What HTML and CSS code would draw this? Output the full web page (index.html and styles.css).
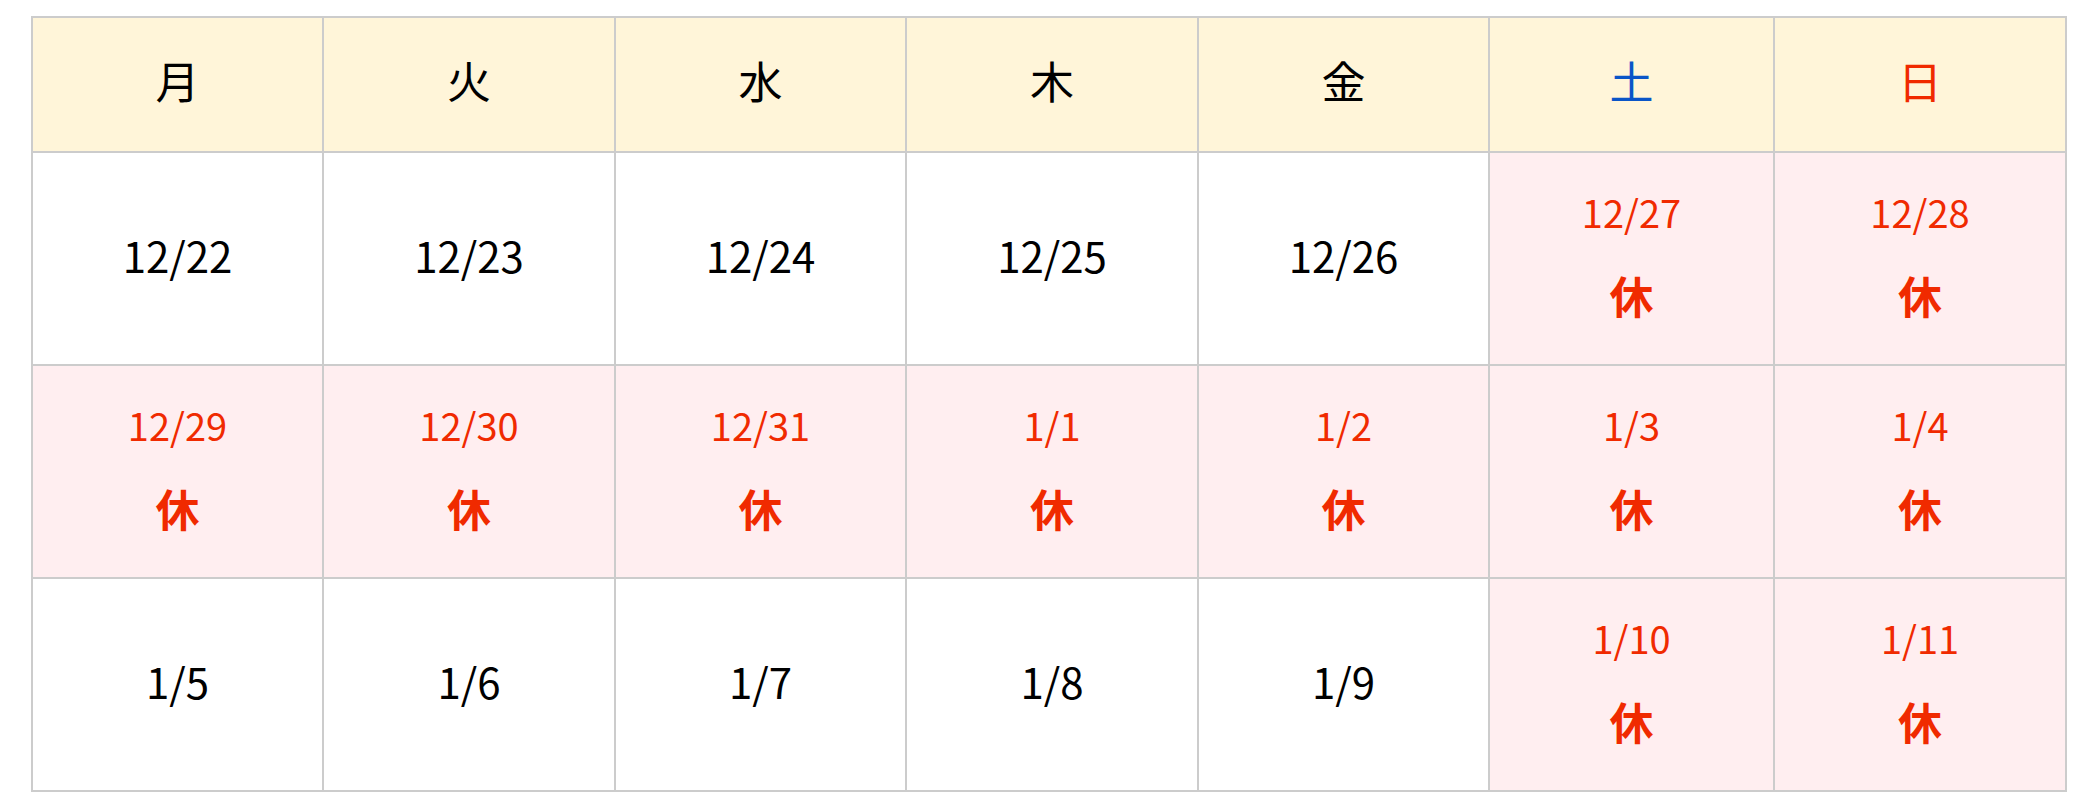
FILE: index.html
```html
<!DOCTYPE html>
<html lang="ja">
<head>
<meta charset="utf-8">
<title>営業日カレンダー</title>
<link rel="stylesheet" href="styles.css">
</head>
<body>
<div class="page">
  <div class="calendar">
    <div class="cell head">月</div>
    <div class="cell head">火</div>
    <div class="cell head">水</div>
    <div class="cell head">木</div>
    <div class="cell head">金</div>
    <div class="cell head sat">土</div>
    <div class="cell head sun">日</div>

    <div class="cell"><span class="date">12/22</span></div>
    <div class="cell"><span class="date">12/23</span></div>
    <div class="cell"><span class="date">12/24</span></div>
    <div class="cell"><span class="date">12/25</span></div>
    <div class="cell"><span class="date">12/26</span></div>
    <div class="cell off"><span class="date">12/27</span><span class="mark">休</span></div>
    <div class="cell off"><span class="date">12/28</span><span class="mark">休</span></div>

    <div class="cell off"><span class="date">12/29</span><span class="mark">休</span></div>
    <div class="cell off"><span class="date">12/30</span><span class="mark">休</span></div>
    <div class="cell off"><span class="date">12/31</span><span class="mark">休</span></div>
    <div class="cell off"><span class="date">1/1</span><span class="mark">休</span></div>
    <div class="cell off"><span class="date">1/2</span><span class="mark">休</span></div>
    <div class="cell off"><span class="date">1/3</span><span class="mark">休</span></div>
    <div class="cell off"><span class="date">1/4</span><span class="mark">休</span></div>

    <div class="cell"><span class="date">1/5</span></div>
    <div class="cell"><span class="date">1/6</span></div>
    <div class="cell"><span class="date">1/7</span></div>
    <div class="cell"><span class="date">1/8</span></div>
    <div class="cell"><span class="date">1/9</span></div>
    <div class="cell off"><span class="date">1/10</span><span class="mark">休</span></div>
    <div class="cell off"><span class="date">1/11</span><span class="mark">休</span></div>
  </div>
</div>
</body>
</html>
```

FILE: styles.css
```css
html, body {
  margin: 0;
  padding: 0;
  background: #ffffff;
}

body {
  font-family: "Noto Sans CJK JP", "Noto Sans", sans-serif;
  color: #000000;
}

.page {
  padding: 16px 0 0 31px;
}

.calendar {
  display: grid;
  grid-template-columns: 291px 292px 291px 292px 291px 285px 292px;
  grid-template-rows: 135px 213px 213px 213px;
  width: 2036px;
  box-sizing: border-box;
  border-left: 2px solid #cccccc;
  border-top: 2px solid #cccccc;
}

.cell {
  box-sizing: border-box;
  border-right: 2px solid #cccccc;
  border-bottom: 2px solid #cccccc;
  display: flex;
  flex-direction: column;
  align-items: center;
  justify-content: center;
  padding-bottom: 8px;
  background: #ffffff;
}

.head {
  background: #fff5d9;
  font-size: 44px;
  line-height: 1.5;
  font-weight: 400;
  padding-bottom: 10px;
}

.head.sat {
  color: #0a55c8;
}

.head.sun {
  color: #f02a00;
}

.date {
  font-size: 42px;
  line-height: 1.5;
  font-weight: 400;
}

.off {
  background: #ffeef0;
  color: #f02a00;
  padding-bottom: 7px;
}

.off .date {
  font-size: 38px;
  line-height: 1.5;
}

.mark {
  font-size: 44px;
  font-weight: 700;
  line-height: 1.5;
  margin-top: 22px;
}
```
